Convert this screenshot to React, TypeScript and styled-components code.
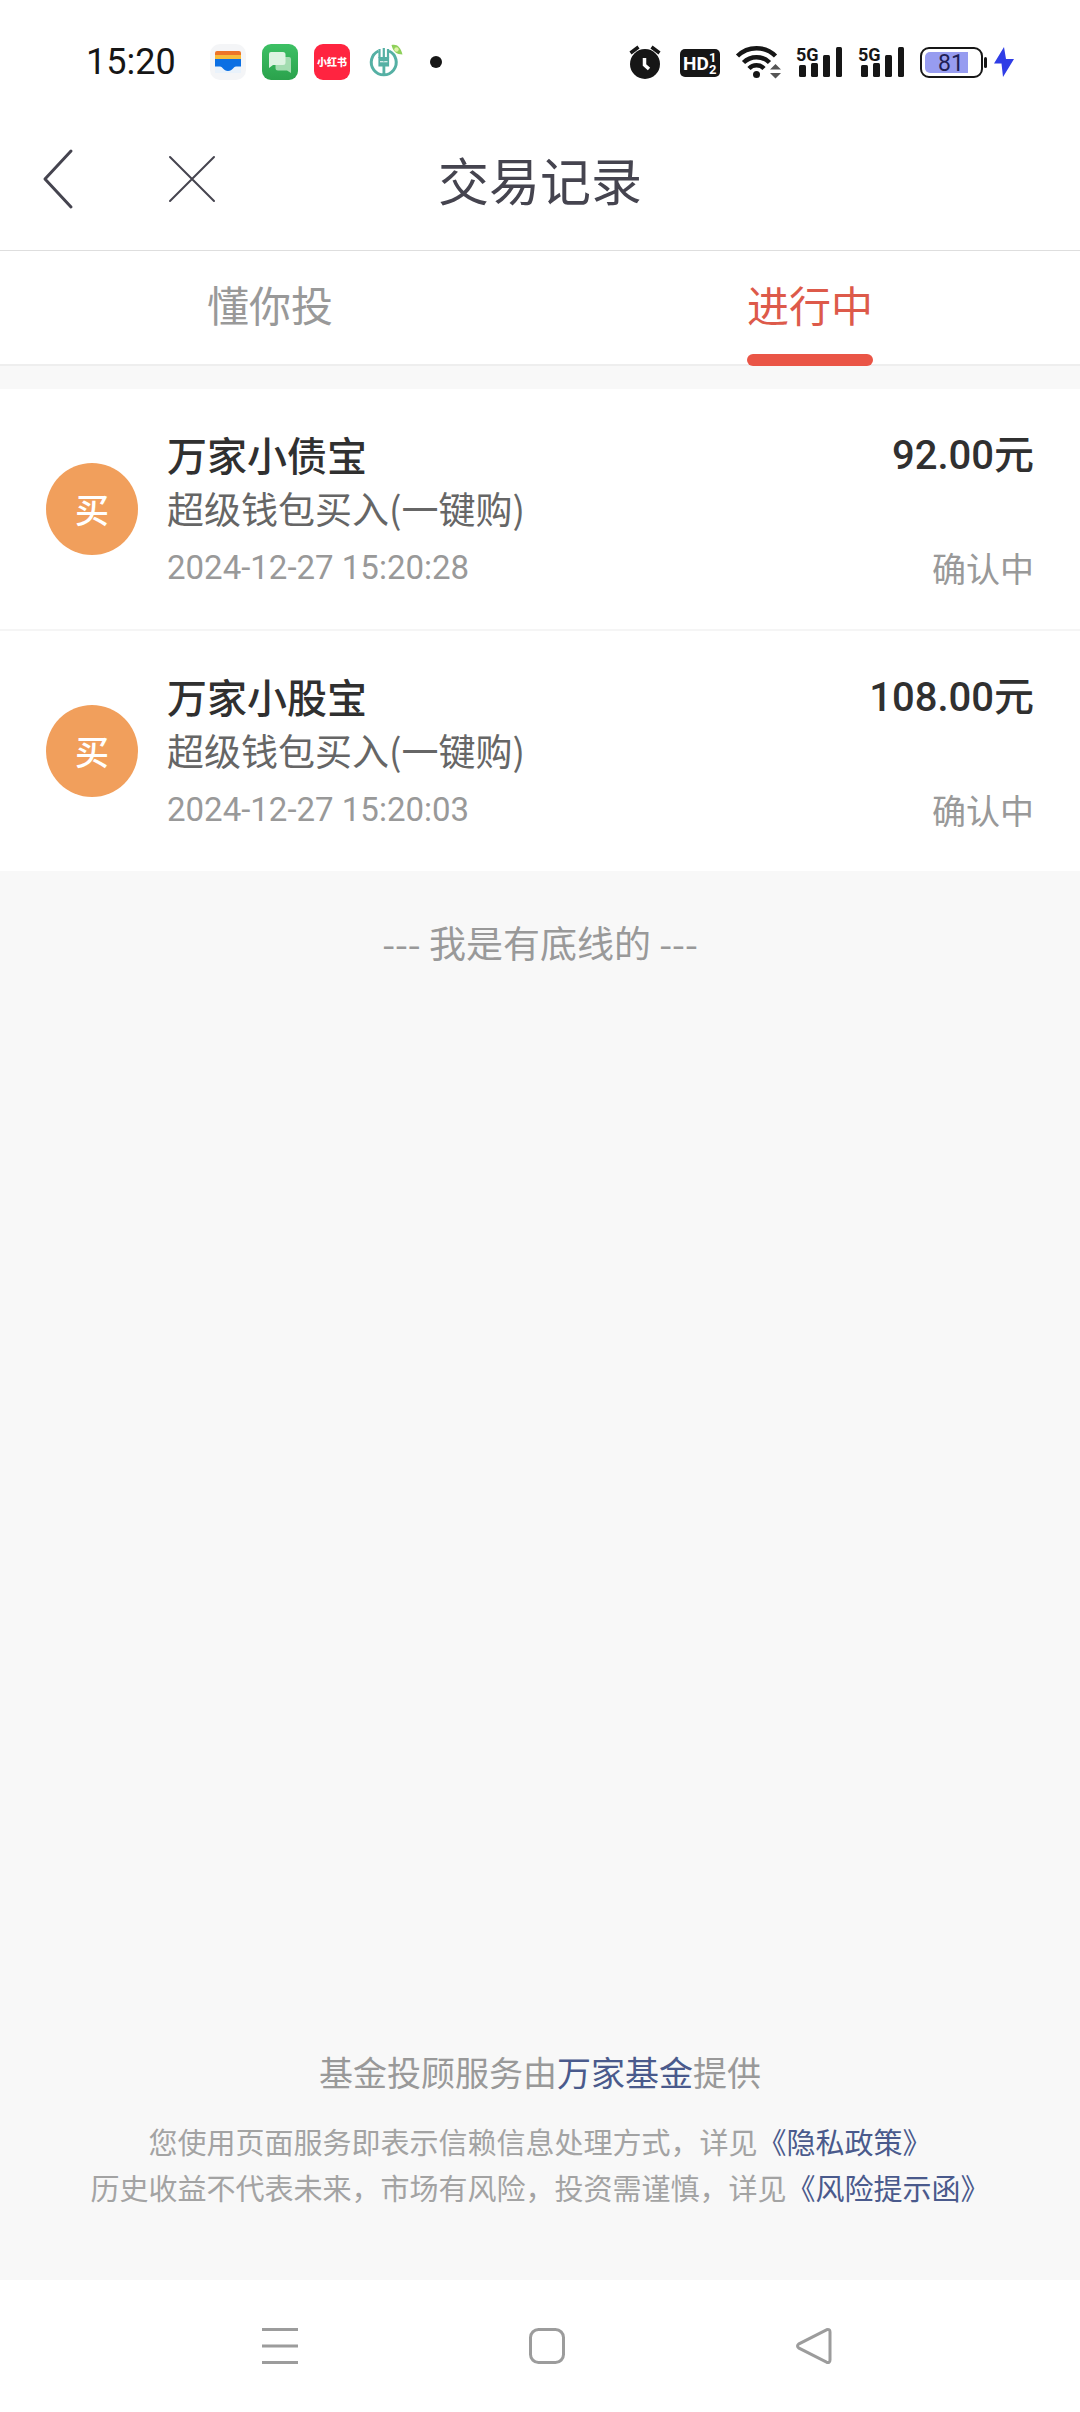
import React, { useState } from "react";
import styled, { createGlobalStyle } from "styled-components";

const GlobalStyle = createGlobalStyle`
  * { box-sizing: border-box; }
  body {
    margin: 0;
    background: #f8f8f8;
    font-family: "Noto Sans CJK SC", "Noto Sans", sans-serif;
    color: #303030;
  }
  button {
    margin: 0;
    padding: 0;
    border: 0;
    background: none;
    font: inherit;
    color: inherit;
    cursor: pointer;
  }
  a { text-decoration: none; }
  h1, h2, p, ul { margin: 0; padding: 0; font-weight: 400; }
  ul { list-style: none; }
  svg { display: block; flex: none; overflow: visible; }
`;

const NUMERIC = `Roboto, "Noto Sans CJK SC", sans-serif`;

const Page = styled.div`
  display: flex;
  flex-direction: column;
  min-height: 100vh;
`;

const StatusBar = styled.div`
  display: flex;
  align-items: center;
  justify-content: space-between;
  height: 107px;
  padding: 17px 66px 0 86px;
  background: #fff;
`;

const StatusLeft = styled.div`
  display: flex;
  align-items: center;
  gap: 34px;
`;

const StatusIcons = styled.div<{ $gap: number }>`
  display: flex;
  align-items: center;
  gap: ${(p) => p.$gap}px;
`;

const Clock = styled.time`
  font-family: ${NUMERIC};
  font-size: 36px;
  line-height: 42px;
  color: #161616;
`;

const Header = styled.header`
  display: grid;
  grid-template-columns: 1fr auto 1fr;
  align-items: center;
  height: 144px;
  padding: 0 43px;
  background: #fff;
  border-bottom: 1px solid #dedede;
`;

const HeaderActions = styled.div`
  display: flex;
  align-items: center;
  gap: 96px;
`;

const Title = styled.h1`
  font-size: 51px;
  line-height: 72px;
  color: #45444f;
`;

const Tabs = styled.div`
  display: grid;
  grid-template-columns: 1fr 1fr;
  justify-items: center;
  background: #fff;
  box-shadow: inset 0 -2px 0 #eeeeee;
`;

const Tab = styled.button<{ $active: boolean }>`
  display: flex;
  flex-direction: column;
  gap: 20px;
  padding-top: 23px;
  font-size: 42px;
  line-height: 60px;
  color: ${(p) => (p.$active ? "#dd5a4a" : "#999999")};

  &::after {
    content: "";
    height: 12px;
    border-radius: 6px;
    background: ${(p) => (p.$active ? "#ea5546" : "transparent")};
  }
`;

const Main = styled.main`
  display: flex;
  flex: 1;
  flex-direction: column;
  padding-top: 23px;
`;

const Records = styled.ul`
  background: #fff;
`;

const Record = styled.li`
  display: flex;
  align-items: stretch;
  padding: 38px 46px;

  & + & { border-top: 2px solid #f5f5f5; }
`;

const Badge = styled.span`
  display: flex;
  flex: none;
  align-items: center;
  justify-content: center;
  align-self: center;
  width: 92px;
  height: 92px;
  margin-right: 29px;
  border-radius: 50%;
  background: #f19f5c;
  color: #fff;
  font-size: 34px;
  font-weight: 500;
  line-height: 46px;
`;

const Details = styled.div`
  flex: 1;
  min-width: 0;
`;

const FundName = styled.h2`
  font-size: 40px;
  font-weight: 500;
  line-height: 54px;
`;

const Description = styled.p`
  font-size: 37px;
  line-height: 54px;
  color: #666666;
`;

const DateTime = styled.time`
  display: block;
  margin-top: 10px;
  font-family: ${NUMERIC};
  font-size: 33px;
  line-height: 46px;
  color: #999999;
`;

const Outcome = styled.div`
  display: flex;
  flex-direction: column;
  justify-content: space-between;
  text-align: right;
`;

const Amount = styled.span`
  font-family: ${NUMERIC};
  font-size: 40px;
  font-weight: 500;
  line-height: 58px;
`;

const State = styled.span`
  font-size: 34px;
  line-height: 46px;
  color: #999999;
`;

const EndNote = styled.p`
  padding-top: 44px;
  font-size: 37px;
  line-height: 54px;
  text-align: center;
  color: #999999;
`;

const Footer = styled.footer`
  margin-top: auto;
  padding-bottom: 70px;
  text-align: center;
`;

const Provider = styled.p`
  margin-bottom: 21px;
  font-size: 34px;
  line-height: 50px;
  color: #999999;
`;

const Notice = styled.p`
  font-size: 29px;
  line-height: 46px;
  color: #a3a3a3;
`;

const FooterLink = styled.a`
  color: #4a5a8c;
`;

const SystemNav = styled.nav`
  display: grid;
  grid-template-columns: repeat(3, 1fr);
  place-items: center;
  height: 132px;
  padding: 0 133px 0 147px;
  background: #fff;
`;

const INK = "#161616";

const WalletIcon = () => (
  <svg width="36" height="36" viewBox="0 0 36 36">
    <rect width="36" height="36" rx="10" fill="#f4f5f7" />
    <path d="M5 12V9a2 2 0 0 1 2-2h22a2 2 0 0 1 2 2v3z" fill="#ee7528" />
    <rect x="5" y="11" width="26" height="4" fill="#f8bd3c" />
    <path d="M5 22h26v7H5z" fill="#e9f2fb" />
    <path d="M5 15h26v7.500h-5c-3 0-3 4.500-8 4.500s-5-4.500-8-4.500H5z" fill="#0b6fe3" />
  </svg>
);

const MessagesIcon = () => (
  <svg width="36" height="36" viewBox="0 0 36 36">
    <defs>
      <linearGradient id="messages" x1="0" y1="0" x2="0" y2="1">
        <stop offset="0" stopColor="#3dc064" />
        <stop offset="1" stopColor="#2ba24c" />
      </linearGradient>
    </defs>
    <rect width="36" height="36" rx="9" fill="url(#messages)" />
    <path d="M16 13h11a2 2 0 0 1 2 2v14l-4-2.500h-9a2.500 2.500 0 0 1-2.500-2.500v-9z" fill="#a3dcb0" />
    <path d="M9 8h12a2.500 2.500 0 0 1 2.500 2.500v8A2.500 2.500 0 0 1 21 21H11l-4 3V10a2 2 0 0 1 2-2z" fill="#ddf3e1" />
  </svg>
);

const RedNoteIcon = () => (
  <svg width="36" height="36" viewBox="0 0 36 36">
    <rect width="36" height="36" rx="9" fill="#ff2440" />
    <text x="18" y="22" textAnchor="middle" fontSize="10" fontWeight="900" fill="#fff">
      小红书
    </text>
  </svg>
);

const BankIcon = () => (
  <svg width="36" height="36" viewBox="0 0 36 36">
    <g fill="none" stroke="#55b0a4">
      <path d="M12.500 7A12.500 12.500 0 1 0 23 7" strokeWidth="3" />
      <path d="M13.500 5v9M17.800 4v11M22 5v9" strokeWidth="2.200" />
    </g>
    <path
      d="M12.400 13h10.700v9.500h-3.800V31h-2.800v-8.500h-4.100zM17.300 17v1h1v-1zM14 17.300v1h7.500v-1z"
      fill="#55b0a4"
      fillRule="evenodd"
    />
    <path d="M25.500 1c5-1.500 9 1.500 11 9.500-6 0-9.500-3-11-9.500z" fill="#8ed05a" />
    <circle cx="30.500" cy="5.500" r="2.200" fill="#dff3a8" />
  </svg>
);

const MoreDot = () => (
  <svg width="36" height="36" viewBox="0 0 36 36">
    <circle cx="18" cy="18" r="6" fill={INK} />
  </svg>
);

const AlarmIcon = () => (
  <svg width="36" height="36" viewBox="0 0 36 36">
    <circle cx="16" cy="20" r="15" fill={INK} />
    <path d="M1.500 9l8-6M30.500 9l-8-6" stroke={INK} strokeWidth="3.500" />
    <path d="M15.500 14v7l4.500 4" fill="none" stroke="#fff" strokeWidth="3.500" />
  </svg>
);

const HdIcon = () => (
  <svg width="40" height="36" viewBox="0 0 40 36" fontFamily="Roboto, sans-serif" fontWeight="700" fill="#fff">
    <rect y="5" width="40" height="28" rx="5" fill={INK} />
    <text x="3" y="26" fontSize="19">HD</text>
    <text x="29" y="18" fontSize="13">1</text>
    <text x="29" y="30" fontSize="13">2</text>
  </svg>
);

const WifiIcon = () => (
  <svg width="46" height="36" viewBox="0 0 46 36">
    <g fill="none" stroke={INK} strokeWidth="4.500">
      <path d="M2.500 12A27 27 0 0 1 40.500 12" />
      <path d="M8.500 18.500A18.500 18.500 0 0 1 34.500 18.500" />
      <path d="M14 24.500A10.500 10.500 0 0 1 29 24.500" />
    </g>
    <circle cx="21.500" cy="30.500" r="3.500" fill={INK} />
    <path d="M35 25.500l5.500-5.500 5.500 5.500zM35 29h11l-5.500 5.500z" fill="#555" />
  </svg>
);

const SignalIcon = () => (
  <svg width="47" height="36" viewBox="0 0 47 36" fill={INK}>
    <text x="0" y="17" fontFamily="Roboto, sans-serif" fontSize="18" fontWeight="700">5G</text>
    <rect x="3" y="21" width="7" height="12" rx="1.500" />
    <rect x="15" y="19" width="7" height="14" rx="1.500" />
    <rect x="27" y="11" width="7" height="22" rx="1.500" />
    <rect x="40" y="3" width="6" height="30" rx="1.500" />
  </svg>
);

const BatteryIcon = () => (
  <svg width="94" height="36" viewBox="0 0 94 36">
    <rect x="1" y="4" width="61" height="29" rx="8" fill="#fff" stroke={INK} strokeWidth="2" />
    <path d="M10 8h38v21H10a5 5 0 0 1-5-5V13a5 5 0 0 1 5-5z" fill="#979cf0" />
    <rect x="64" y="13" width="3" height="11" rx="1.500" fill={INK} />
    <text x="31" y="27" textAnchor="middle" fontFamily="Roboto, sans-serif" fontSize="23" fill="#1f1f55">81</text>
    <path d="M84 3L74 19.500h7.500L83 33l11-18h-8z" fill="#2f3de6" />
  </svg>
);

const BackIcon = () => (
  <svg width="30" height="60" viewBox="0 0 30 60">
    <path d="M28 2L2 30l26 28" fill="none" stroke="#45444f" strokeWidth="3" strokeLinecap="round" strokeLinejoin="round" />
  </svg>
);

const CloseIcon = () => (
  <svg width="46" height="46" viewBox="0 0 46 46">
    <path d="M1 1l44 44M45 1L1 45" stroke="#45444f" strokeWidth="2" strokeLinecap="round" />
  </svg>
);

const navStroke = { fill: "none", stroke: "#9c9c9c", strokeWidth: 3 };

const MenuIcon = () => (
  <svg width="36" height="36" viewBox="0 0 36 36">
    <path d="M0 1.500h36M0 18h36M0 34.500h36" {...navStroke} />
  </svg>
);

const HomeIcon = () => (
  <svg width="36" height="36" viewBox="0 0 36 36">
    <rect x="1.500" y="1.500" width="33" height="33" rx="8" {...navStroke} />
  </svg>
);

const ReturnIcon = () => (
  <svg width="36" height="36" viewBox="0 0 36 36">
    <path d="M30.500 1.800L3 15.800q-3 2.200 0 4.400L30.500 34.200q3.500 1 3.500-2.200V4q0-3.200-3.500-2.200z" {...navStroke} />
  </svg>
);

const TABS = ["懂你投", "进行中"];

const RECORDS = [
  { name: "万家小债宝", time: "2024-12-27 15:20:28", amount: "92.00元" },
  { name: "万家小股宝", time: "2024-12-27 15:20:03", amount: "108.00元" },
];

export default function App() {
  const [active, setActive] = useState(1);

  return (
    <Page>
      <GlobalStyle />
      <StatusBar>
        <StatusLeft>
          <Clock>15:20</Clock>
          <StatusIcons $gap={16}>
            <WalletIcon />
            <MessagesIcon />
            <RedNoteIcon />
            <BankIcon />
            <MoreDot />
          </StatusIcons>
        </StatusLeft>
        <StatusIcons $gap={15}>
          <AlarmIcon />
          <HdIcon />
          <WifiIcon />
          <SignalIcon />
          <SignalIcon />
          <BatteryIcon />
        </StatusIcons>
      </StatusBar>

      <Header>
        <HeaderActions>
          <button type="button" aria-label="返回"><BackIcon /></button>
          <button type="button" aria-label="关闭"><CloseIcon /></button>
        </HeaderActions>
        <Title>交易记录</Title>
      </Header>

      <Tabs role="tablist">
        {TABS.map((label, i) => (
          <Tab
            key={label}
            type="button"
            role="tab"
            aria-selected={i === active}
            $active={i === active}
            onClick={() => setActive(i)}
          >
            {label}
          </Tab>
        ))}
      </Tabs>

      <Main>
        <Records>
          {RECORDS.map((r) => (
            <Record key={r.name}>
              <Badge>买</Badge>
              <Details>
                <FundName>{r.name}</FundName>
                <Description>超级钱包买入(一键购)</Description>
                <DateTime>{r.time}</DateTime>
              </Details>
              <Outcome>
                <Amount>{r.amount}</Amount>
                <State>确认中</State>
              </Outcome>
            </Record>
          ))}
        </Records>
        <EndNote>--- 我是有底线的 ---</EndNote>

        <Footer>
          <Provider>
            基金投顾服务由<FooterLink href="#fund">万家基金</FooterLink>提供
          </Provider>
          <Notice>
            您使用页面服务即表示信赖信息处理方式，详见<FooterLink href="#privacy">《隐私政策》</FooterLink>
          </Notice>
          <Notice>
            历史收益不代表未来，市场有风险，投资需谨慎，详见<FooterLink href="#risk">《风险提示函》</FooterLink>
          </Notice>
        </Footer>
      </Main>

      <SystemNav>
        <button type="button" aria-label="最近任务"><MenuIcon /></button>
        <button type="button" aria-label="主屏幕"><HomeIcon /></button>
        <button type="button" aria-label="系统返回"><ReturnIcon /></button>
      </SystemNav>
    </Page>
  );
}
